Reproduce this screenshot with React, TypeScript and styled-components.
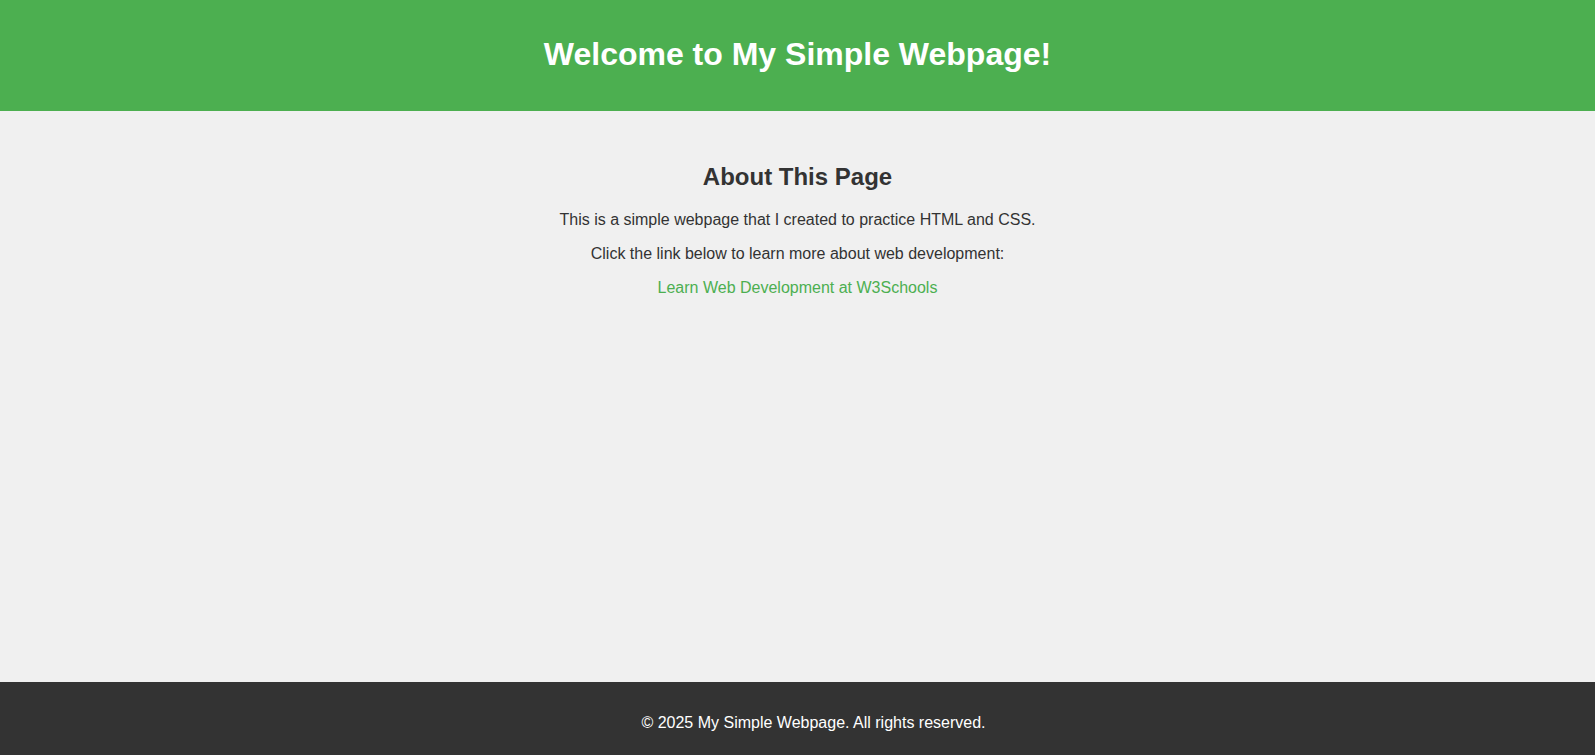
import React from "react";
import styled, { createGlobalStyle } from "styled-components";

const GlobalStyle = createGlobalStyle`
  html, body {
    margin: 0;
    padding: 0;
  }
  body {
    font-family: "Liberation Sans", Arial, sans-serif;
    background: #f0f0f0;
    color: #333333;
  }
`;

const Page = styled.div`
  display: flex;
  flex-direction: column;
  min-height: 100vh;
`;

const Header = styled.header`
  background: #4caf50;
  color: #ffffff;
  text-align: center;
  padding: 15px 0 16.4px;
`;

const Title = styled.h1`
  margin: 21.44px 0;
  font-size: 32px;
  font-weight: bold;
`;

const Main = styled.main`
  flex: 1;
  padding-top: 32.4px;
  text-align: center;
`;

const Heading = styled.h2`
  margin: 18.9px 0 20.9px;
  font-size: 24px;
  font-weight: bold;
  color: #333333;
`;

const Paragraph = styled.p`
  margin: 16px 0;
  font-size: 16px;
`;

const Link = styled.a`
  color: #4caf50;
  text-decoration: none;
`;

const Footer = styled.footer`
  background: #333333;
  color: #ffffff;
  text-align: center;
  padding: 31.8px 0 22.8px 32px;
`;

const FooterText = styled.p`
  margin: 0;
  font-size: 16px;
`;

export default function App() {
  return (
    <Page>
      <GlobalStyle />
      <Header>
        <Title>Welcome to My Simple Webpage!</Title>
      </Header>
      <Main>
        <Heading>About This Page</Heading>
        <Paragraph>This is a simple webpage that I created to practice HTML and CSS.</Paragraph>
        <Paragraph>Click the link below to learn more about web development:</Paragraph>
        <Paragraph>
          <Link href="#">Learn Web Development at W3Schools</Link>
        </Paragraph>
      </Main>
      <Footer>
        <FooterText>© 2025 My Simple Webpage. All rights reserved.</FooterText>
      </Footer>
    </Page>
  );
}
